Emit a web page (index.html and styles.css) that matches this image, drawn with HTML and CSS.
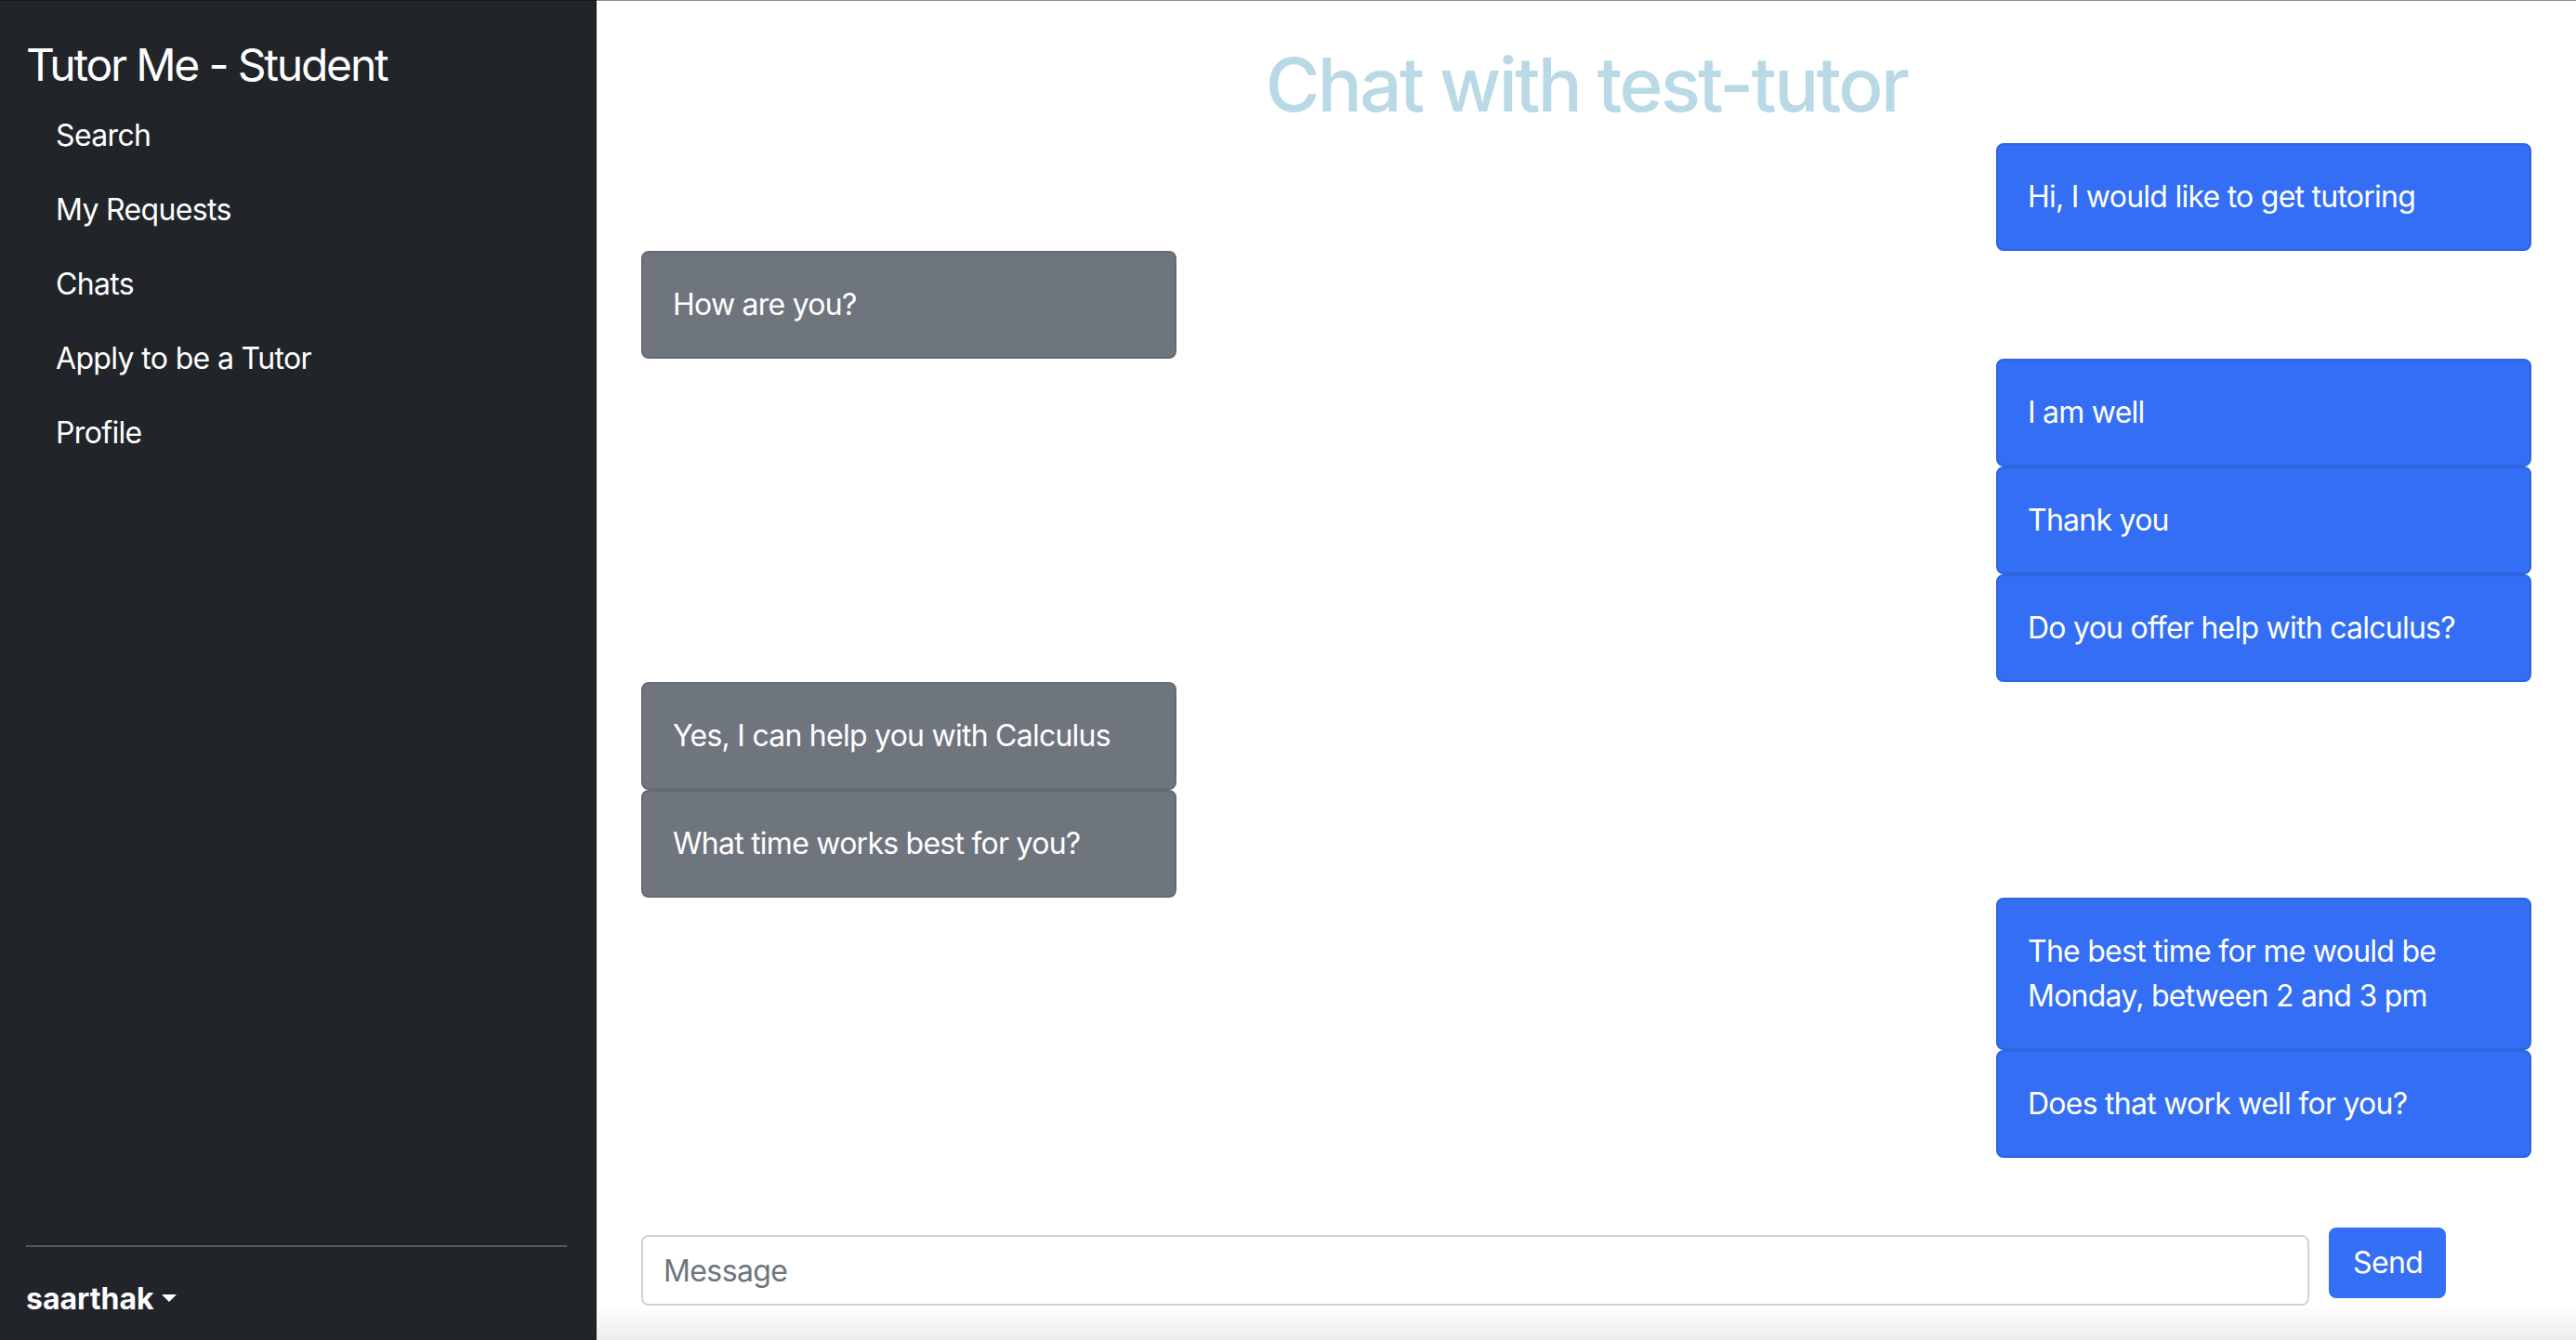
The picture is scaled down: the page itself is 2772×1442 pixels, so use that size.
FILE: index.html
```html
<!DOCTYPE html>
<html lang="en">
<head>
<meta charset="utf-8">
<title>Tutor Me - Chat</title>
<link rel="stylesheet" href="styles.css">
</head>
<body>
  <aside class="sidebar">
    <a class="brand" href="#">Tutor Me - Student</a>
    <ul class="nav">
      <li><a class="nav-link" href="#">Search</a></li>
      <li><a class="nav-link" href="#">My Requests</a></li>
      <li><a class="nav-link" href="#">Chats</a></li>
      <li><a class="nav-link" href="#">Apply to be a Tutor</a></li>
      <li><a class="nav-link" href="#">Profile</a></li>
    </ul>
    <hr class="divider">
    <a class="user" href="#">saarthak<span class="caret"></span></a>
  </aside>
  <main class="main">
    <h1 class="chat-title">Chat with test-tutor</h1>
    <div class="messages">
      <div class="row sent"><div class="bubble">Hi, I would like to get tutoring</div></div>
      <div class="row received"><div class="bubble">How are you?</div></div>
      <div class="row sent"><div class="bubble">I am well</div></div>
      <div class="row sent"><div class="bubble">Thank you</div></div>
      <div class="row sent"><div class="bubble">Do you offer help with calculus?</div></div>
      <div class="row received"><div class="bubble">Yes, I can help you with Calculus</div></div>
      <div class="row received"><div class="bubble">What time works best for you?</div></div>
      <div class="row sent"><div class="bubble">The best time for me would be Monday, between 2 and 3 pm</div></div>
      <div class="row sent"><div class="bubble">Does that work well for you?</div></div>
    </div>
    <form class="composer">
      <input class="message-input" type="text" placeholder="Message">
      <button class="send-btn" type="button">Send</button>
    </form>
  </main>
</body>
</html>
```
FILE: styles.css
```css
* { box-sizing: border-box; }

html, body {
  margin: 0;
  height: 100%;
}

body {
  display: flex;
  height: 1442px;
  overflow: hidden;
  font-family: Inter, "Liberation Sans", sans-serif;
  letter-spacing: -0.75px;
  background: #ffffff;
  color: #212529;
}

.sidebar {
  width: 642px;
  flex-shrink: 0;
  display: flex;
  flex-direction: column;
  padding: 33px 32px 20px 28px;
  background: #212529;
  border-top: 1px solid #16181b;
  color: #fff;
}

.brand {
  font-size: 48px;
  line-height: 72px;
  letter-spacing: -2.2px;
  color: #fff;
  text-decoration: none;
}

.nav {
  list-style: none;
  margin: 0 0 auto;
  padding: 0;
}

.nav-link {
  display: block;
  padding: 16px 32px;
  font-size: 32px;
  line-height: 48px;
  letter-spacing: -0.65px;
  color: #fff;
  text-decoration: none;
}

.divider {
  margin: 32px 0;
  border: 0;
  border-top: 2px solid rgba(255, 255, 255, 0.25);
}

.user {
  font-size: 32px;
  line-height: 48px;
  font-weight: 700;
  letter-spacing: 0;
  color: #fff;
  text-decoration: none;
}

.caret {
  display: inline-block;
  margin-left: 8px;
  vertical-align: 8px;
  border-top: 8px solid #fff;
  border-left: 8.5px solid transparent;
  border-right: 8.5px solid transparent;
}

.main {
  flex: 1;
  display: flex;
  flex-direction: column;
  padding: 0 48px;
  border-top: 1px solid #8d8d8d;
  background: linear-gradient(to bottom, #ffffff calc(100% - 36px), #ededed);
}

.chat-title {
  margin: 42px 0 15px;
  text-align: center;
  font-size: 80px;
  line-height: 96px;
  font-weight: 500;
  letter-spacing: -2.7px;
  color: #b8d9e5;
}

.messages {
  display: flex;
  flex-direction: column;
}

.row {
  display: flex;
}

.row.sent { justify-content: flex-end; }
.row.received { justify-content: flex-start; }

.bubble {
  width: 576px;
  padding: 32px;
  font-size: 32px;
  line-height: 48px;
  color: #fff;
  border-radius: 8px;
  border: 2px solid;
}

.sent .bubble {
  background: #336ef4;
  border-color: #2e64de;
}

.received .bubble {
  background: #6f757d;
  border-color: #656a71;
}

.composer {
  display: flex;
  align-items: flex-start;
  gap: 21px;
  margin: 75px 0 0;
}

.message-input {
  width: 1795px;
  height: 76px;
  margin-top: 8px;
  padding: 12px 22px;
  font-family: inherit;
  font-size: 32px;
  line-height: 48px;
  letter-spacing: -0.6px;
  color: #212529;
  background: #fff;
  border: 2px solid #ced4da;
  border-radius: 8px;
}

.message-input::placeholder {
  color: #6c757d;
}

.send-btn {
  width: 126px;
  height: 76px;
  padding: 12px 24px;
  font-family: inherit;
  font-size: 32px;
  line-height: 48px;
  letter-spacing: -0.6px;
  color: #fff;
  background: #346ff5;
  border: 2px solid #346ff5;
  border-radius: 8px;
}
```
